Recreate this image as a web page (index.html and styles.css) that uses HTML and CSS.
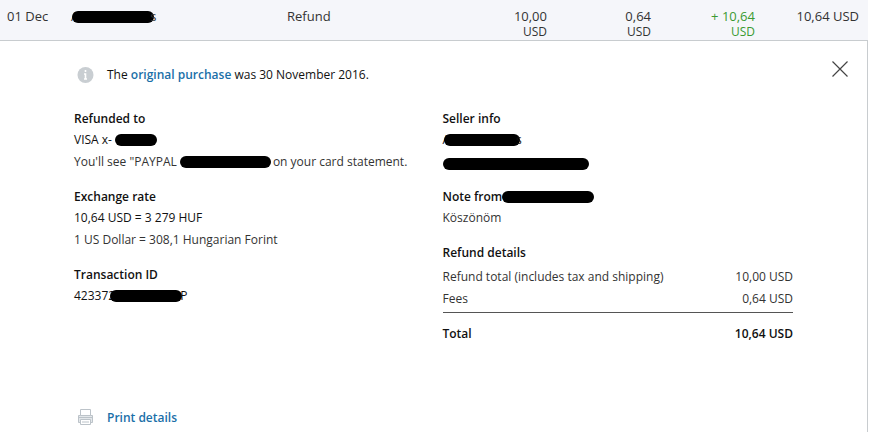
FILE: index.html
```html
<!DOCTYPE html>
<html lang="en">
<head>
  <meta charset="UTF-8">
  <meta name="viewport" content="width=device-width, initial-scale=1.0">
  <title>Transaction details</title>
  <link rel="stylesheet" href="styles.css">
</head>
<body>
  <div class="summary">
    <div>01 Dec</div>
    <div class="masked-line">A<span class="mask mask-name"></span>s</div>
    <div>Refund</div>
    <div class="amount">10,00<br><span class="currency">USD</span></div>
    <div class="amount">0,64<br><span class="currency">USD</span></div>
    <div class="amount positive">+ 10,64<br><span class="currency">USD</span></div>
    <div class="amount">10,64 USD</div>
  </div>

  <main class="panel">
    <div class="notice">
      <svg class="icon" width="18" height="18" viewBox="0 0 18 18" aria-hidden="true">
        <circle cx="8.5" cy="9" r="8" fill="#c9ced2"/>
        <path d="M8.5 4v2M7 8h1.5v4.500M7 13h3" fill="none" stroke="#fff" stroke-width="1.6"/>
      </svg>
      <p>The <a href="#">original purchase</a> was 30 November 2016.</p>
      <button class="close" type="button" aria-label="Close">
        <svg width="16" height="16" viewBox="0 0 16 16">
          <path d="M0.5 0.5l15 15M15.5 0.5l-15 15" fill="none" stroke="#444" stroke-width="1.2"/>
        </svg>
      </button>
    </div>

    <div class="columns">
      <div>
        <section>
          <h2>Refunded to</h2>
          <p class="masked-line strong">VISA x-<span class="mask mask-card"></span></p>
          <p class="masked-line">You'll see "PAYPAL <span class="mask mask-statement"></span>on your card statement.</p>
        </section>
        <section>
          <h2>Exchange rate</h2>
          <p class="strong">10,64 USD = 3 279 HUF</p>
          <p>1 US Dollar = 308,1 Hungarian Forint</p>
        </section>
        <section>
          <h2>Transaction ID</h2>
          <p class="masked-line strong">423372<span class="mask mask-id"></span>P</p>
        </section>
      </div>

      <div>
        <section>
          <h2>Seller info</h2>
          <p class="masked-line strong">A<span class="mask mask-seller"></span>s</p>
          <p class="masked-line email"><span class="mask mask-email"></span></p>
        </section>
        <section>
          <h2 class="masked-line">Note from<span class="mask mask-note"></span></h2>
          <p>Köszönöm</p>
        </section>
        <section>
          <h2>Refund details</h2>
          <table class="details">
            <tbody>
              <tr><td>Refund total (includes tax and shipping)</td><td>10,00 USD</td></tr>
              <tr><td>Fees</td><td>0,64 USD</td></tr>
            </tbody>
            <tfoot>
              <tr><td>Total</td><td>10,64 USD</td></tr>
            </tfoot>
          </table>
        </section>
      </div>
    </div>

    <div class="print">
      <svg class="icon" width="18" height="18" viewBox="0 0 18 18" aria-hidden="true">
        <path d="M1.500 6.500h14v7h-14z" fill="#e3e7ea" stroke="#bcc3c9"/>
        <path d="M3.500 0.500h10v6h-10zM3.500 10.500h10v5h-10z" fill="#fff" stroke="#bcc3c9"/>
        <path d="M1.500 8.500h14M5 13h7" fill="none" stroke="#bcc3c9"/>
      </svg>
      <a href="#">Print details</a>
    </div>
  </main>
</body>
</html>
```
FILE: styles.css
```css
* {
  box-sizing: border-box;
}

body {
  margin: 0 7px 0 0;
  min-height: 100vh;
  display: flex;
  flex-direction: column;
  background: #fff;
  color: #333;
  font-family: "Open Sans", "Noto Sans", sans-serif;
  font-size: 12px;
  line-height: 22px;
}

h2, p {
  margin: 0;
  font-size: 12px;
}

h2 {
  color: #111;
  font-weight: 600;
  line-height: 21px;
}

a {
  color: #1a6fa8;
  font-weight: 600;
  text-decoration: none;
}

.summary {
  display: grid;
  grid-template-columns: 64px 216px 100px 1fr repeat(3, 104px);
  padding: 9px 9px 1px 7px;
  border-bottom: 1px solid #c8cccf;
  background: #f5f6fa;
  font-size: 13px;
  line-height: 15px;
}

.amount {
  text-align: right;
}

.currency {
  font-size: 12px;
}

.positive {
  color: #3a9a32;
}

.panel {
  flex: 1;
  padding: 20px 19px 4px 74px;
  border-right: 1px solid #c8cccf;
}

.notice {
  display: flex;
  align-items: center;
  color: #111;
}

.icon {
  flex: none;
  margin: 0 12px 0 3px;
}

.close {
  display: flex;
  margin: 0 0 0 auto;
  padding: 0 0 12px;
  border: 0;
  background: none;
  cursor: pointer;
}

.columns {
  display: grid;
  grid-template-columns: 1fr 1fr;
  gap: 18px;
  margin-top: 19px;
  padding-right: 55px;
}

section {
  margin-bottom: 13px;
}

.strong {
  color: #111;
}

/* Blacked-out private data */
.masked-line {
  display: flex;
  align-items: center;
  white-space: pre;
}

.summary .masked-line {
  align-items: flex-start;
}

.email {
  min-height: 22px;
}

.mask {
  height: 12px;
  border-radius: 6px;
  background: #000;
}

.mask-name {
  width: 82px;
  margin: 2px -4px 0 -7px;
}

.mask-card {
  width: 42px;
  margin-left: 3px;
}

.mask-statement {
  width: 91px;
  margin-right: 2px;
}

.mask-id {
  width: 72px;
  margin: 0 -2px 0 -5px;
}

.mask-seller {
  width: 76px;
  margin: 0 -4px 0 -6px;
}

.mask-email {
  width: 146px;
  margin-top: 4px;
}

.mask-note {
  width: 92px;
}

.details {
  width: 100%;
  margin-top: 3px;
  border-collapse: collapse;
}

.details td {
  padding: 0;
}

.details td:last-child {
  text-align: right;
}

.details tbody tr:last-child td {
  padding-bottom: 2px;
}

.details tfoot td {
  padding-top: 10px;
  border-top: 1px solid #555;
  color: #111;
  font-weight: 600;
}

.print {
  display: flex;
  align-items: center;
  margin-top: 49px;
}
```
